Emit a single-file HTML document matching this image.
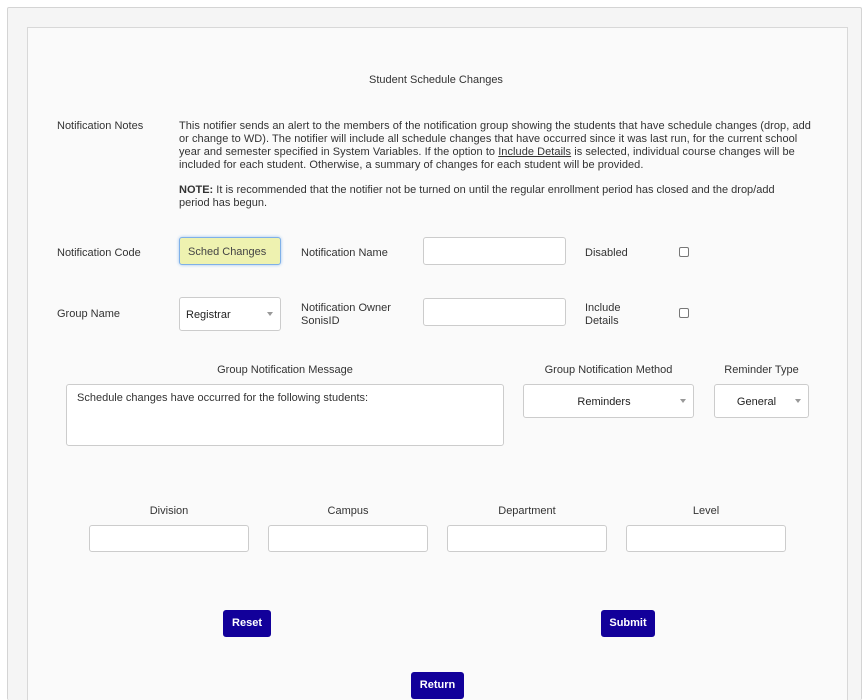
<!DOCTYPE html>
<html><head><meta charset="utf-8"><style>
*{box-sizing:border-box}
html,body{margin:0;width:866px;height:700px;overflow:hidden}
body{background:#fff;font-family:"Liberation Sans",Arial,sans-serif;font-size:11px;color:#333;position:relative}
.outer{position:absolute;left:7px;top:7px;width:855px;height:693px;background:#f5f5f5;border:1px solid #d4d4d4;border-bottom:none;border-radius:2px}
.inner{position:absolute;left:27px;top:27px;width:821px;height:673px;background:#fafafa;border:1px solid #d8d8d8;border-bottom:none}
.a{position:absolute;line-height:13px}
.in{position:absolute;background:#fff;border:1px solid #ccc;border-radius:3px}
.sel::after{content:"";position:absolute;right:7px;top:50%;margin-top:-2px;border-left:3px solid transparent;border-right:3px solid transparent;border-top:4px solid #999}
.cb{position:absolute;width:10px;height:10px;border:1px solid #777;border-radius:2px;background:#fff}
.btn{position:absolute;background:#12009a;color:#fff;font-weight:bold;border-radius:3px;text-align:center;font-size:11px}
.c{text-align:center}
</style></head><body>
<div class="outer"></div>
<div class="inner"></div>
<div class="a" style="left:369px;top:74px">Student Schedule Changes</div>
<div class="a" style="left:57px;top:120px">Notification Notes</div>
<div class="a" style="left:179px;top:120px;width:634px;letter-spacing:0.05px">This notifier sends an alert to the members of the notification group showing the students that have schedule changes (drop, add or change to WD). The notifier will include all schedule changes that have occurred since it was last run, for the current school year and semester specified in System Variables. If the option to <u>Include Details</u> is selected, individual course changes will be included for each student. Otherwise, a summary of changes for each student will be provided.</div>
<div class="a" style="left:179px;top:184px;width:625px"><b>NOTE:</b> It is recommended that the notifier not be turned on until the regular enrollment period has closed and the drop/add period has begun.</div>

<div class="a" style="left:57px;top:247px">Notification Code</div>
<div class="in" style="left:179px;top:237px;width:102px;height:28px;background:#eef2b0;border:1px solid #7fb0e8;box-shadow:0 0 3px #9cc4f0"></div>
<div class="a" style="left:188px;top:246px;color:#444">Sched Changes</div>
<div class="a" style="left:301px;top:247px">Notification Name</div>
<div class="in" style="left:423px;top:237px;width:143px;height:28px"></div>
<div class="a" style="left:585px;top:247px">Disabled</div>
<div class="cb" style="left:679px;top:247px"></div>

<div class="a" style="left:57px;top:308px">Group Name</div>
<div class="in sel" style="left:179px;top:297px;width:102px;height:34px"></div>
<div class="a" style="left:186px;top:309px;color:#222">Registrar</div>
<div class="a" style="left:301px;top:302px">Notification Owner<br>SonisID</div>
<div class="in" style="left:423px;top:298px;width:143px;height:28px"></div>
<div class="a" style="left:585px;top:302px">Include<br>Details</div>
<div class="cb" style="left:679px;top:308px"></div>

<div class="a c" style="left:66px;top:364px;width:438px">Group Notification Message</div>
<div class="in" style="left:66px;top:384px;width:438px;height:62px"></div>
<div class="a" style="left:77px;top:392px">Schedule changes have occurred for the following students:</div>
<div class="a c" style="left:523px;top:364px;width:171px">Group Notification Method</div>
<div class="in sel" style="left:523px;top:384px;width:171px;height:34px"></div>
<div class="a c" style="left:523px;top:396px;width:162px;color:#222">Reminders</div>
<div class="a c" style="left:714px;top:364px;width:95px">Reminder Type</div>
<div class="in sel" style="left:714px;top:384px;width:95px;height:34px"></div>
<div class="a c" style="left:714px;top:396px;width:85px;color:#222">General</div>

<div class="a c" style="left:89px;top:505px;width:160px">Division</div>
<div class="a c" style="left:268px;top:505px;width:160px">Campus</div>
<div class="a c" style="left:447px;top:505px;width:160px">Department</div>
<div class="a c" style="left:626px;top:505px;width:160px">Level</div>
<div class="in" style="left:89px;top:525px;width:160px;height:27px"></div>
<div class="in" style="left:268px;top:525px;width:160px;height:27px"></div>
<div class="in" style="left:447px;top:525px;width:160px;height:27px"></div>
<div class="in" style="left:626px;top:525px;width:160px;height:27px"></div>

<div class="btn" style="left:223px;top:610px;width:48px;height:27px;line-height:27px">Reset</div>
<div class="btn" style="left:601px;top:610px;width:54px;height:27px;line-height:27px">Submit</div>
<div class="btn" style="left:411px;top:672px;width:53px;height:27px;line-height:27px">Return</div>
</body></html>
